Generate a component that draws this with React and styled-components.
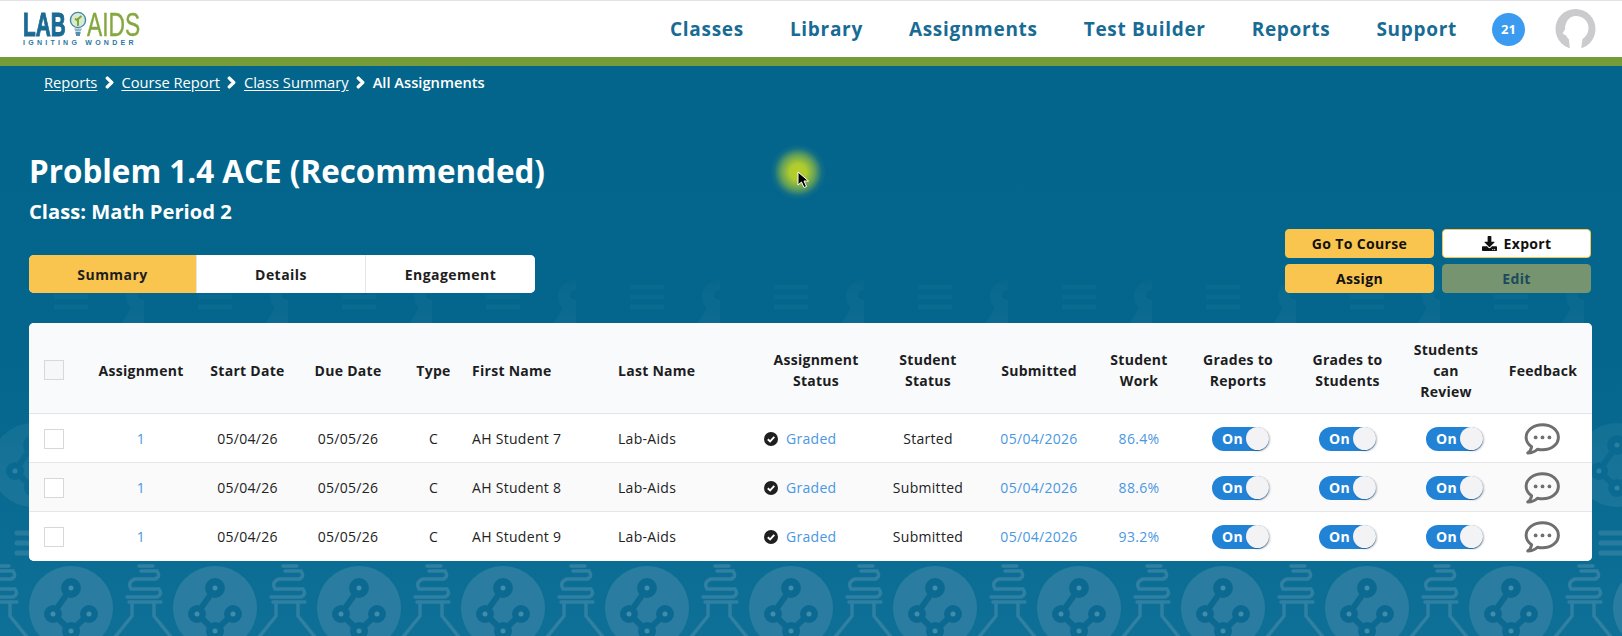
import React from "react";
import styled, { createGlobalStyle } from "styled-components";
import { FaChevronRight, FaDownload } from "react-icons/fa";

const GlobalStyle = createGlobalStyle`
	html, body {
		margin: 0;
		padding: 0;
		font-family: "Open Sans", "Liberation Sans", sans-serif;
	}
	* {
		box-sizing: border-box;
	}
`;

const Page = styled.div`
	width: 1622px;
	height: 636px;
	overflow: hidden;
	display: flex;
	flex-direction: column;
`;

const Header = styled.header`
	height: 66px;
	flex: none;
	background: #fff;
	border-top: 1px solid #e2e2e8;
	border-bottom: 9px solid #759c38;
	display: flex;
	align-items: center;
	justify-content: space-between;
	padding: 0 26px 0 23px;
`;

const Logo = styled.div`
	width: 118px;
	display: flex;
	flex-direction: column;
	gap: 2px;
`;

const LogoTop = styled.div`
	display: flex;
	align-items: center;
	height: 25px;
`;

const LogoWord = styled.span`
	display: block;
	flex: none;
	width: ${(p) => p.$width}px;
	font-family: "Liberation Sans", sans-serif;
	font-size: 33px;
	line-height: 25px;
	font-weight: ${(p) => (p.$light ? 400 : 700)};
	color: ${(p) => (p.$light ? "#84a83f" : "#1a6a94")};
	-webkit-text-stroke: ${(p) => (p.$light ? "0.4px #84a83f" : "1px #1a6a94")};
	transform: scaleX(${(p) => p.$scale});
	transform-origin: left center;
`;

const LogoTag = styled.div`
	font-family: "Liberation Sans", sans-serif;
	font-size: 7px;
	line-height: 7px;
	font-weight: 700;
	letter-spacing: 3.25px;
	color: #2a78a3;
	white-space: nowrap;
`;

const Nav = styled.nav`
	display: flex;
	align-items: center;
`;

const NavLink = styled.a`
	font-size: 19px;
	font-weight: 700;
	letter-spacing: 0.7px;
	color: #186b95;
	margin-right: 46px;
	white-space: nowrap;

	&:nth-last-of-type(1) {
		margin-right: 35px;
	}
`;

const Badge = styled.span`
	width: 33px;
	height: 33px;
	border-radius: 50%;
	background: #3b9bf1;
	color: #fff;
	font-size: 13px;
	font-weight: 700;
	display: flex;
	align-items: center;
	justify-content: center;
	margin-right: 30px;
`;

const Main = styled.main`
	position: relative;
	flex: 1;
	padding: 6px 30px 0 29px;
	background: linear-gradient(#03658b 0%, #04668c 50%, #0e7097 100%);
`;

const Wallpaper = styled.svg`
	position: absolute;
	inset: 0;
	width: 100%;
	height: 100%;
	mask-image: linear-gradient(transparent 170px, rgba(0, 0, 0, 0.22) 250px, #000 500px);
`;

const Content = styled.div`
	position: relative;
`;

const Crumbs = styled.div`
	display: flex;
	align-items: center;
	height: 20px;
	padding-left: 15px;
	font-size: 14.7px;
	color: #fff;
`;

const Crumb = styled.a`
	color: #fff;
	text-decoration: underline;
	text-underline-offset: 2px;
`;

const CrumbNow = styled.span`
	font-weight: 600;
`;

const CrumbArrow = styled(FaChevronRight)`
	width: 11px;
	height: 13px;
	margin: 0 6.5px;
	stroke: currentColor;
	stroke-width: 50px;
`;

const Title = styled.h1`
	margin: 59px 0 0;
	font-size: 31.4px;
	line-height: 40px;
	font-weight: 700;
	color: #fff;
`;

const SubTitle = styled.h2`
	margin: 8px 0 0;
	font-size: 20.2px;
	line-height: 24px;
	font-weight: 700;
	color: #fff;
`;

const Toolbar = styled.div`
	margin-top: 6px;
	height: 64px;
	display: flex;
	align-items: flex-end;
	justify-content: space-between;
`;

const Tabs = styled.div`
	display: flex;
	width: 506px;
	height: 38px;
	border-radius: 5px;
	overflow: hidden;
	background: #fff;
`;

const Tab = styled.div`
	width: ${(p) => p.$width}px;
	display: flex;
	align-items: center;
	justify-content: center;
	font-size: 14px;
	font-weight: 700;
	letter-spacing: 0.45px;
	color: #1d1d22;
	background: ${(p) => (p.$active ? "#f9c54e" : "#fff")};
	border-left: ${(p) => (p.$first ? "0" : "1px solid #e4e6ec")};
`;

const Actions = styled.div`
	display: grid;
	grid-template-columns: 149px 149px;
	grid-auto-rows: 29px;
	gap: 6px 8px;
	margin-right: 1px;
`;

const ActionButton = styled.button`
	border: 1px solid ${(p) => (p.$kind === "muted" ? "#76946f" : "#f9c54e")};
	border-radius: 4px;
	padding: 0;
	font-family: inherit;
	font-size: 14px;
	font-weight: 700;
	letter-spacing: 0.35px;
	display: flex;
	align-items: center;
	justify-content: center;
	gap: 7px;
	color: ${(p) => (p.$kind === "muted" ? "#1c4a5e" : "#111")};
	background: ${(p) =>
		p.$kind === "muted" ? "#76946f" : p.$kind === "plain" ? "#fff" : "#f9c54e"};
`;

const TableCard = styled.div`
	margin-top: 30px;
	width: 1563px;
	border-radius: 5px;
	overflow: hidden;
	background: #fff;
`;

const COLUMNS = "50px 124px 89px 112px 59px 146px 137px 140px 84px 138px 62px 136px 83px 114px 80px";

const HeadRow = styled.div`
	display: grid;
	grid-template-columns: ${COLUMNS};
	height: 91px;
	padding-top: 4px;
	align-items: center;
	background: #f8fafc;
	border-bottom: 1px solid #dfe3ea;
`;

const BodyRow = styled.div`
	display: grid;
	grid-template-columns: ${COLUMNS};
	height: 49px;
	padding-top: 1px;
	align-items: center;
	background: ${(p) => (p.$shade ? "#fafafb" : "#fff")};
	border-bottom: 1px solid ${(p) => (p.$last ? "transparent" : "#e4e6ea")};
`;

const HeadCell = styled.div`
	font-size: 14px;
	line-height: 21px;
	font-weight: 700;
	letter-spacing: 0.28px;
	color: #1d1d22;
	text-align: ${(p) => (p.$left ? "left" : "center")};
	padding-left: ${(p) => (p.$left ? "9px" : "0")};
`;

const Cell = styled.div`
	font-size: 14px;
	letter-spacing: 0.3px;
	color: #222;
	display: flex;
	align-items: center;
	justify-content: ${(p) => (p.$left ? "flex-start" : "center")};
	padding-left: ${(p) => p.$pad || 0}px;
	padding-right: ${(p) => p.$padRight || 0}px;
	white-space: nowrap;
`;

const DataLink = styled.a`
	color: #4a97e2;
`;

const Checkbox = styled.span`
	display: block;
	width: 20px;
	height: 20px;
	margin-left: 15px;
	background: ${(p) => (p.$head ? "#f6f7f9" : "#fff")};
	border: 1px solid #d8d8d8;
`;

const Toggle = styled.span`
	width: 57px;
	height: 24px;
	margin-left: ${(p) => p.$nudge || 0}px;
	border-radius: 12px;
	background: #2283d6;
	display: flex;
	align-items: center;
	justify-content: space-between;
	padding-left: 10px;
	color: #fff;
	font-size: 14px;
	font-weight: 700;
`;

const Knob = styled.span`
	width: 23px;
	height: 23px;
	border-radius: 50%;
	background: #f3f3f6;
	box-shadow: 1px 1px 2px rgba(0, 0, 0, 0.28);
`;

const Highlight = styled.div`
	position: absolute;
	left: 770px;
	top: 78px;
	width: 56px;
	height: 56px;
	border-radius: 50%;
	background: radial-gradient(circle closest-side, #b6d02a 0%, #aecb2e 30%, rgba(125, 175, 75, 0.8) 60%, rgba(40, 125, 125, 0.4) 85%, transparent 100%);
`;

const Pointer = styled.svg`
	position: absolute;
	left: 27px;
	top: 27px;
	width: 14px;
	height: 18px;
`;

const LogoBulb = () => (
	<svg width="18" height="27" viewBox="0 0 18 27" style={{ flex: "none" }}>
		<circle cx="9" cy="9" r="7.6" fill="#dcebd0" stroke="#3f88ad" strokeWidth="1.4" />
		<path d="M9 15V7M9 10l-3-2.5M9 8l3.5-3" stroke="#7ea63c" strokeWidth="2" fill="none" />
		<path d="M5 17.5l1.5 3h5l1.5-3z" fill="#8eb7cf" />
		<path d="M6.500 22h5M7 24h4" stroke="#1a6a94" strokeWidth="1.5" />
	</svg>
);

const Avatar = () => (
	<svg width="41" height="41" viewBox="0 0 41 41">
		<circle cx="20.500" cy="20" r="20" fill="#cbcbcd" />
		<path
			d="M21 7c7 0 12.500 5 12.500 12 0 5-2.500 8.500-6 11l-1.500 11h-11l-1-10.500c-1-1-2-2.500-3-4l-3.500-2 2.500-4C10 13 14 7 21 7z"
			fill="#fff"
		/>
	</svg>
);

const DoneIcon = () => (
	<svg width="14" height="14" viewBox="0 0 14 14" style={{ marginRight: 8 }}>
		<circle cx="7" cy="7" r="7" fill="#1f1f1f" />
		<path d="M3.800 7.300l2.300 2.200 4.200-4.600" stroke="#fff" strokeWidth="1.900" fill="none" />
	</svg>
);

const ChatIcon = () => (
	<svg width="36" height="32" viewBox="0 0 34 30">
		<path
			d="M17.500 1.500C9 1.500 2 6.700 2 13.300c0 3.600 2 6.700 5.200 8.900-.3 2.200-1.300 4.400-3.700 6 3.700 0 7-1.200 9.200-3.500 1.500.3 3.100.5 4.800.5 8.500 0 15-5.200 15-11.900S26 1.500 17.500 1.500z"
			fill="none"
			stroke="#6f6f6f"
			strokeWidth="2.800"
			strokeLinejoin="round"
		/>
		<circle cx="11" cy="13.500" r="1.800" fill="#6f6f6f" />
		<circle cx="17.500" cy="13.500" r="1.800" fill="#6f6f6f" />
		<circle cx="24" cy="13.500" r="1.800" fill="#6f6f6f" />
	</svg>
);

const Molecule = ({ x, y }) => (
	<g transform={`translate(${x} ${y})`}>
		<path d="M0-20L-18 6L0 23L18 6" fill="none" stroke="#0c6a92" strokeWidth="6" />
		<circle cx="0" cy="-20" r="10" fill="#0c6a92" />
		<circle cx="-18" cy="6" r="9" fill="#0c6a92" />
		<circle cx="18" cy="6" r="9" fill="#0c6a92" />
		<circle cx="0" cy="23" r="9" fill="#0c6a92" />
		<circle cx="0" cy="-20" r="2.500" fill="#3f8cab" />
		<circle cx="-18" cy="6" r="2.500" fill="#3f8cab" />
		<circle cx="18" cy="6" r="2.500" fill="#3f8cab" />
		<circle cx="0" cy="23" r="2.500" fill="#3f8cab" />
	</g>
);

const Flask = ({ x, y }) => (
	<g transform={`translate(${x} ${y})`} fill="none" stroke="#2f80a2" strokeWidth="3.500" strokeLinecap="round">
		<path d="M-4 0H10M-2 5H14Q18 11 12 13H-8Q-16 16 -12 23H16Q20 28 14 31H-16" />
		<path d="M-14 36H18" />
		<path d="M-11 36V50L-32 76M11 36V50L32 76" />
	</g>
);

const Wall = () => (
	<Wallpaper viewBox="0 0 1622 570" aria-hidden="true">
		<defs>
			<g id="circle-tile">
				<circle cx="0" cy="0" r="42" fill="#2a7da0" />
				<Molecule x={0} y={0} />
			</g>
			<g id="bulb-tile">
				<circle cx="0" cy="0" r="42" fill="#1e779b" />
				<Molecule x={0} y={0} />
				<path d="M-16 68H16M-16 78H16M-16 88H16" stroke="#2a7da0" strokeWidth="5" strokeLinecap="round" />
			</g>
			<g id="bands-tile">
				<path d="M-17 -34H17M-17 -24H17M-17 -14H17" stroke="#2a7da0" strokeWidth="5" />
				<circle cx="72" cy="-24" r="17" fill="#2a7da0" />
				<path d="M60 -14L48 8H86L84 -14z" fill="#2a7da0" />
				<circle cx="72" cy="-26" r="5" fill="#0c6a92" />
			</g>
			<pattern id="lab-wall" x="0" y="0" width="144" height="570" patternUnits="userSpaceOnUse">
				<use href="#circle-tile" x="71" y="542" />
				<Flask x={143} y={500} />
				<Flask x={-1} y={500} />
				<use href="#bulb-tile" x="33" y="399" />
				<use href="#bulb-tile" x="177" y="399" />
				<use href="#bands-tile" x="71" y="255" />
			</pattern>
		</defs>
		<rect width="1622" height="570" fill="url(#lab-wall)" />
	</Wallpaper>
);

const students = [
	{ name: "AH Student 7", status: "Started", work: "86.4%" },
	{ name: "AH Student 8", status: "Submitted", work: "88.6%" },
	{ name: "AH Student 9", status: "Submitted", work: "93.2%" },
];

const App = () => {
	return (
		<Page>
			<GlobalStyle />
			<Header>
				<Logo>
					<LogoTop>
						<LogoWord $width={46} $scale={0.63}>LAB</LogoWord>
						<LogoBulb />
						<LogoWord $width={54} $scale={0.69} $light>AIDS</LogoWord>
					</LogoTop>
					<LogoTag>IGNITING WONDER</LogoTag>
				</Logo>
				<Nav>
					<NavLink>Classes</NavLink>
					<NavLink>Library</NavLink>
					<NavLink>Assignments</NavLink>
					<NavLink>Test Builder</NavLink>
					<NavLink>Reports</NavLink>
					<NavLink>Support</NavLink>
					<Badge>21</Badge>
					<Avatar />
				</Nav>
			</Header>
			<Main>
				<Wall />
				<Content>
					<Crumbs>
						<Crumb>Reports</Crumb>
						<CrumbArrow />
						<Crumb>Course Report</Crumb>
						<CrumbArrow />
						<Crumb>Class Summary</Crumb>
						<CrumbArrow />
						<CrumbNow>All Assignments</CrumbNow>
					</Crumbs>
					<Title>Problem 1.4 ACE (Recommended)</Title>
					<SubTitle>Class: Math Period 2</SubTitle>
					<Toolbar>
						<Tabs>
							<Tab $width={167} $active $first>Summary</Tab>
							<Tab $width={169}>Details</Tab>
							<Tab $width={170}>Engagement</Tab>
						</Tabs>
						<Actions>
							<ActionButton>Go To Course</ActionButton>
							<ActionButton $kind="plain"><FaDownload size={15} />Export</ActionButton>
							<ActionButton>Assign</ActionButton>
							<ActionButton $kind="muted">Edit</ActionButton>
						</Actions>
					</Toolbar>
					<TableCard>
						<HeadRow>
							<Checkbox $head />
							<HeadCell>Assignment</HeadCell>
							<HeadCell>Start Date</HeadCell>
							<HeadCell>Due Date</HeadCell>
							<HeadCell>Type</HeadCell>
							<HeadCell $left>First Name</HeadCell>
							<HeadCell $left>Last Name</HeadCell>
							<HeadCell>Assignment<br />Status</HeadCell>
							<HeadCell>Student<br />Status</HeadCell>
							<HeadCell>Submitted</HeadCell>
							<HeadCell>Student<br />Work</HeadCell>
							<HeadCell>Grades to<br />Reports</HeadCell>
							<HeadCell>Grades to<br />Students</HeadCell>
							<HeadCell>Students<br />can<br />Review</HeadCell>
							<HeadCell>Feedback</HeadCell>
						</HeadRow>
						{students.map((s, i) => (
							<BodyRow key={s.name} $shade={i === 1} $last={i === 2}>
								<Checkbox />
								<Cell><DataLink>1</DataLink></Cell>
								<Cell>05/04/26</Cell>
								<Cell>05/05/26</Cell>
								<Cell>C</Cell>
								<Cell $left $pad={9}>{s.name}</Cell>
								<Cell $left $pad={9}>Lab-Aids</Cell>
								<Cell $left $pad={18}><DoneIcon /><DataLink>Graded</DataLink></Cell>
								<Cell>{s.status}</Cell>
								<Cell><DataLink>05/04/2026</DataLink></Cell>
								<Cell><DataLink>{s.work}</DataLink></Cell>
								<Cell><Toggle $nudge={5}>On<Knob /></Toggle></Cell>
								<Cell><Toggle>On<Knob /></Toggle></Cell>
								<Cell><Toggle $nudge={17}>On<Knob /></Toggle></Cell>
								<Cell $padRight={2}><ChatIcon /></Cell>
							</BodyRow>
						))}
					</TableCard>
				</Content>
				<Highlight>
					<Pointer viewBox="0 0 14 18">
						<path d="M1 1v13l3.500-3 2.500 5.500 2.500-1-2.500-5.500h4.500z" fill="#000" stroke="#fff" strokeWidth="1" />
					</Pointer>
				</Highlight>
			</Main>
		</Page>
	);
};

export default App;
